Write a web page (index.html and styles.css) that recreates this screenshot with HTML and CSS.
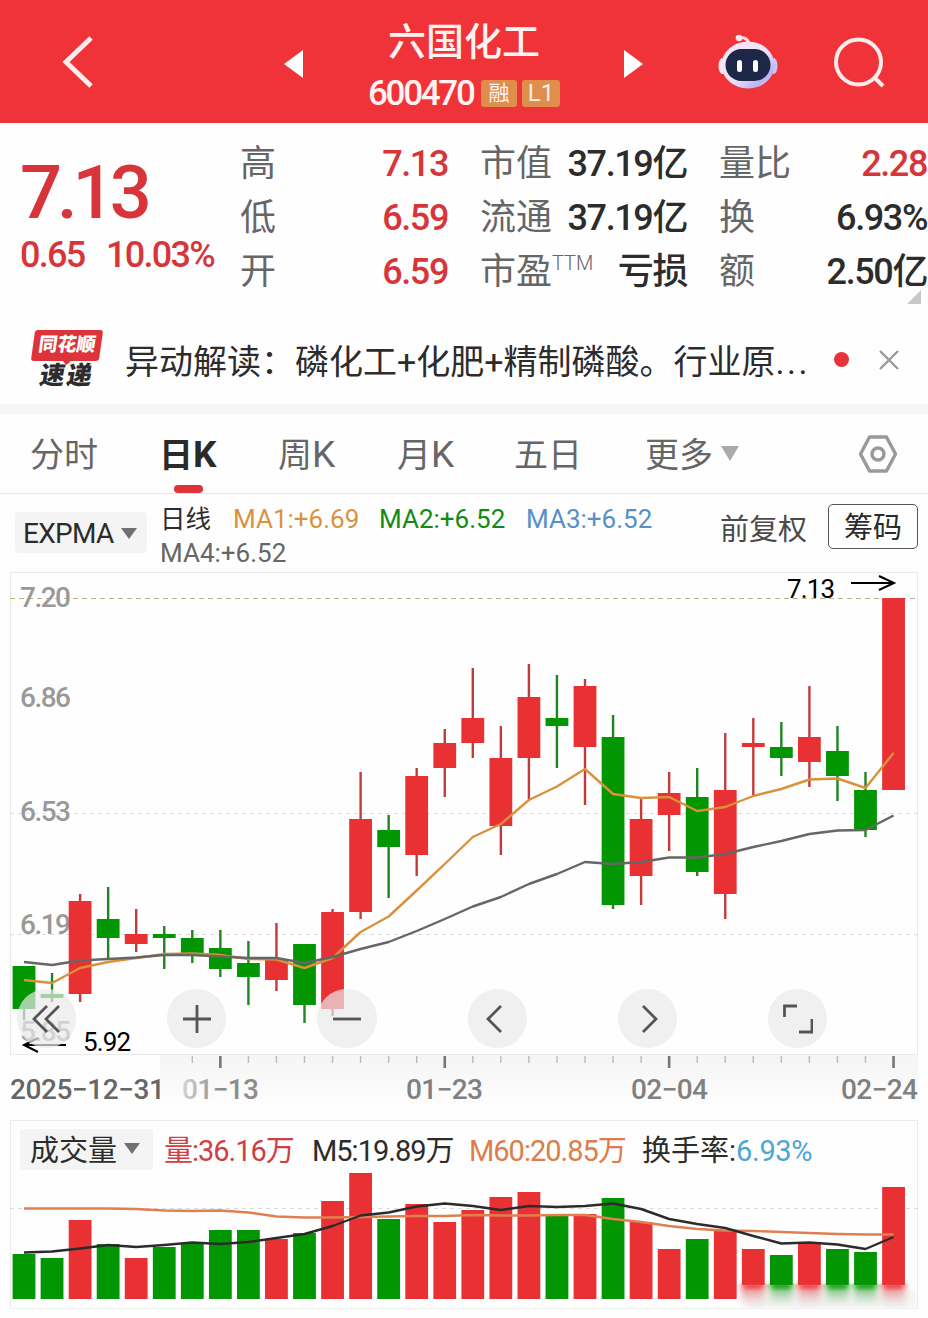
FILE: index.html
```
<!DOCTYPE html>
<html lang="zh-CN">
<head>
    <meta charset="UTF-8">
    <meta name="viewport" content="width=device-width, initial-scale=1.0">
    <title>六国化工 600470</title>
    <link rel="stylesheet" href="styles.css">
</head>
<body>
    <header>
        <svg class="back" viewBox="0 0 32 54"><path d="M29 3 L4 27 L29 51"/></svg>
        <svg class="prev" viewBox="0 0 20 28"><path d="M0 14 L19 0 V28 Z"/></svg>
        <div class="stock">
            <h1>六国化工</h1>
            <div class="code-row">
                <span class="code">600470</span>
                <span class="tag">融</span>
                <span class="tag level">L1</span>
            </div>
        </div>
        <svg class="next" viewBox="0 0 20 28"><path d="M20 14 L1 0 V28 Z"/></svg>
        <svg class="robot" viewBox="0 0 60 56">
            <defs>
                <linearGradient id="shell" x1="0" y1="0" x2="1" y2="1">
                    <stop offset="0" stop-color="#ffe9f0"/>
                    <stop offset="0.55" stop-color="#ece0fb"/>
                    <stop offset="0.8" stop-color="#b9b4f5"/>
                    <stop offset="1" stop-color="#f6dcf3"/>
                </linearGradient>
            </defs>
            <path d="M20 4 Q28 2 31 9" fill="none" stroke="#ffd9dc" stroke-width="3"/>
            <circle cx="21" cy="4" r="3.3" fill="#ffe6e8"/>
            <ellipse cx="4.500" cy="32" rx="4" ry="8" fill="#fbe3f2"/>
            <ellipse cx="55.500" cy="32" rx="4" ry="8" fill="#c9c6fb"/>
            <ellipse cx="30" cy="31" rx="26.500" ry="23.500" fill="url(#shell)"/>
            <rect x="7.500" y="15" width="45" height="32" rx="16" fill="#1d2747"/>
            <rect x="19" y="26" width="5" height="12" rx="2.500" fill="#fff"/>
            <rect x="35" y="26" width="5" height="12" rx="2.500" fill="#fff"/>
        </svg>
        <svg class="search" viewBox="0 0 52 52"><circle cx="24.500" cy="25" r="22.500"/><path d="M40 40 L49 49"/></svg>
    </header>

    <section class="quote">
        <div class="price-box">
            <div class="price">7.13</div>
            <div class="change"><span>0.65</span><span>10.03%</span></div>
        </div>
        <dl class="col-high">
            <dt>高</dt><dd class="up">7.13</dd>
            <dt>低</dt><dd class="up">6.59</dd>
            <dt>开</dt><dd class="up">6.59</dd>
        </dl>
        <dl class="col-cap">
            <dt>市值</dt><dd>37.19亿</dd>
            <dt>流通</dt><dd>37.19亿</dd>
            <dt>市盈<sup>TTM</sup></dt><dd>亏损</dd>
        </dl>
        <dl class="col-ratio">
            <dt>量比</dt><dd class="up">2.28</dd>
            <dt>换</dt><dd>6.93%</dd>
            <dt>额</dt><dd>2.50亿</dd>
        </dl>
        <i class="corner"></i>
    </section>

    <section class="news">
        <div class="news-logo">
            <b>同花顺</b>
            <em>速递</em>
        </div>
        <p>异动解读：磷化工+化肥+精制磷酸。行业原<span>...</span></p>
        <i class="dot"></i>
        <svg class="close" viewBox="0 0 22 22"><path d="M2 2 L20 20 M20 2 L2 20"/></svg>
    </section>

    <nav>
        <a class="t1">分时</a>
        <a class="t2 active">日<span>K</span></a>
        <a class="t3">周<span>K</span></a>
        <a class="t4">月<span>K</span></a>
        <a class="t5">五日</a>
        <a class="t6">更多</a>
        <i class="caret big"></i>
        <svg class="setting" viewBox="0 0 40 38">
            <path d="M11.500 2 H28.500 L37.500 19 L28.500 36 H11.500 L2.500 19 Z"/>
            <circle cx="20" cy="19" r="6"/>
        </svg>
    </nav>

    <section class="indicator">
        <div class="chip">EXPMA<i class="caret"></i></div>
        <div class="ma">
            <span class="ma-day">日线</span>
            <span class="ma1">MA1:+6.69</span>
            <span class="ma2">MA2:+6.52</span>
            <span class="ma3">MA3:+6.52</span>
            <span class="ma4">MA4:+6.52</span>
        </div>
        <span class="adjust">前复权</span>
        <button>筹码</button>
    </section>

    <section class="kline">
        <svg id="kline" viewBox="0 570 928 550"></svg>
        <div class="tools">
            <span><svg viewBox="0 0 30 30"><path d="M15 2 L2 15 L15 28 M27 2 L14 15 L27 28"/></svg></span>
            <span><svg viewBox="0 0 30 30"><path d="M1 15 H29 M15 1 V29"/></svg></span>
            <span><svg viewBox="0 0 30 30"><path d="M1 15 H29"/></svg></span>
            <span><svg viewBox="0 0 30 30"><path d="M19 2 L6 15 L19 28"/></svg></span>
            <span><svg viewBox="0 0 30 30"><path d="M11 2 L24 15 L11 28"/></svg></span>
            <span><svg viewBox="0 0 30 30"><path d="M1.500 13 V2 H14 M29 15 V28 H16"/></svg></span>
        </div>
    </section>

    <section class="volume">
        <div class="vol-head">
            <div class="chip">成交量<i class="caret"></i></div>
            <span class="vol">量:36.16万</span>
            <span class="m5">M5:19.89万</span>
            <span class="m60">M60:20.85万</span>
            <span class="rate">换手率:<b>6.93%</b></span>
        </div>
        <svg id="volume" viewBox="10 1170 908 138"></svg>
    </section>

    <script src="chart.js"></script>
</body>
</html>
```
FILE: styles.css
```
* {
    box-sizing: border-box;
}

body {
    margin: 0;
    width: 928px;
    height: 1318px;
    overflow: hidden;
    background-color: #fefefe;
    font-family: Roboto, "Noto Sans CJK SC", sans-serif;
    color: #2c2c2c;
}

header {
    display: flex;
    align-items: center;
    height: 123px;
    background-color: #f03239;
}

header svg {
    flex: none;
    fill: #fff;
}

header .back {
    width: 32px;
    height: 54px;
    margin-left: 62px;
    fill: none;
    stroke: #ffecec;
    stroke-width: 5;
}

header .prev {
    width: 20px;
    height: 28px;
    margin: 4px 0 0 190px;
}

.stock {
    width: 200px;
    margin-left: 60px;
    padding-top: 13px;
    color: #fff2f0;
}

.stock h1 {
    margin: 0;
    font-size: 38px;
    font-weight: 500;
    line-height: 50px;
    text-align: center;
}

.code-row {
    display: flex;
    align-items: center;
    height: 52px;
    gap: 6px;
    padding-left: 4px;
}

.code {
    width: 107px;
    font-size: 35px;
    letter-spacing: -2.3px;
    font-weight: 500;
}

.tag {
    width: 36px;
    height: 27px;
    border-radius: 3px;
    background-color: #e08e4b;
    font-size: 21px;
    line-height: 27px;
    text-align: center;
}

.tag.level {
    width: 38px;
    margin-left: -1px;
    font-size: 24px;
}

header .next {
    width: 20px;
    height: 28px;
    margin: 4px 0 0 59px;
}

header .robot {
    width: 60px;
    height: 56px;
    margin-left: 75px;
}

header .search {
    width: 52px;
    height: 52px;
    margin: 3px 0 0 56px;
    fill: none;
    stroke: #ffecec;
    stroke-width: 4;
}

.quote {
    position: relative;
    display: flex;
    height: 199px;
    padding-top: 14px;
}

.price-box {
    width: 240px;
    padding-left: 20px;
    color: #d8353a;
}

.price {
    height: 92px;
    padding-top: 10px;
    font-size: 74px;
    font-weight: 500;
    line-height: 92px;
    letter-spacing: -5px;
}

.change {
    display: flex;
    gap: 24px;
    margin-top: 6px;
    font-size: 36px;
    font-weight: 500;
    line-height: 40px;
    letter-spacing: -1.7px;
}

.change span:first-child {
    width: 62px;
}

dl {
    display: grid;
    grid-template-columns: 80px 1fr;
    grid-auto-rows: 54px;
    margin: 0;
    font-size: 36px;
    line-height: 54px;
    white-space: nowrap;
}

dt {
    color: #666;
}

dt sup {
    display: inline-block;
    font-size: 20px;
    line-height: 20px;
    vertical-align: 14px;
    font-weight: 300;
}

dd {
    margin: 0;
    text-align: right;
    font-weight: 500;
    letter-spacing: -1.4px;
}

.up {
    color: #d8353a;
}

.col-high {
    width: 208px;
}

.col-cap {
    width: 207px;
    margin-left: 32px;
}

.col-ratio {
    width: 208px;
    margin-left: 32px;
}

.corner {
    position: absolute;
    right: 7px;
    top: 167px;
    border-left: 14px solid transparent;
    border-bottom: 14px solid #c8c8c8;
}

.news {
    display: flex;
    align-items: center;
    height: 92px;
    padding: 0 0 7px 31px;
    border-bottom: 10px solid #f6f6f6;
}

.news-logo {
    display: flex;
    flex-direction: column;
    align-items: center;
    width: 72px;
    margin-right: 22px;
}

.news-logo b {
    position: relative;
    width: 68px;
    height: 31px;
    background-color: #dd3339;
    border-radius: 3px;
    color: #fff;
    font-size: 19px;
    line-height: 30px;
    text-align: center;
    transform: skewX(-8deg);
    font-weight: 900;
}

.news-logo b::after {
    content: "";
    position: absolute;
    left: 31px;
    top: 30px;
    border: 5px solid transparent;
    border-top-color: #dd3339;
    border-bottom: 0;
}

.news-logo em {
    font-size: 25px;
    font-weight: 900;
    line-height: 29px;
    letter-spacing: 2px;
    font-style: normal;
    transform: skewX(-10deg);
}

.news p {
    width: 686px;
    margin: 0;
    font-size: 34px;
    white-space: nowrap;
}

.news p span {
    letter-spacing: 2.5px;
}

.dot {
    width: 15px;
    height: 15px;
    margin-left: 23px;
    border-radius: 50%;
    background-color: #e8323a;
}

.close {
    width: 22px;
    height: 22px;
    margin-left: 29px;
    stroke: #999;
    stroke-width: 2.4;
}

nav {
    display: flex;
    align-items: center;
    height: 80px;
    padding-left: 30px;
    border-bottom: 1px solid #e9e9e9;
    font-size: 34px;
    color: #666;
}

nav a {
    position: relative;
    top: -1px;
    white-space: nowrap;
}

nav a span {
    font-size: 37px;
}

.t1 { width: 129px; }
.t2 { width: 119px; }
.t3 { width: 119px; }
.t4 { width: 117px; }
.t5 { width: 131px; }
.t6 { width: 76px; }

nav .active {
    color: #2a2a2a;
    font-weight: 700;
}

nav .active::after {
    content: "";
    position: absolute;
    left: 15px;
    bottom: -16px;
    width: 29px;
    height: 8px;
    border-radius: 4px;
    background-color: #dd3339;
}

.caret {
    flex: none;
    display: inline-block;
    border: 8px solid transparent;
    border-top: 11px solid #707070;
    border-bottom: 0;
}

.caret.big {
    border-width: 15px 9px 0;
    border-top-color: #aaa;
}

.setting {
    width: 40px;
    height: 38px;
    margin-left: 119px;
    fill: none;
    stroke: #999;
    stroke-width: 3.4;
    stroke-linejoin: round;
}

.indicator {
    display: flex;
    height: 76px;
    padding-left: 15px;
}

.chip {
    display: flex;
    align-items: center;
    gap: 7px;
    height: 41px;
    border-radius: 4px;
    background-color: #f4f4f4;
    white-space: nowrap;
}

.indicator .chip {
    width: 132px;
    margin-top: 18px;
    padding: 1px 0 0 8px;
    font-size: 28px;
    letter-spacing: -0.7px;
}

.ma {
    display: flex;
    flex-wrap: wrap;
    align-content: flex-start;
    width: 545px;
    margin-left: 13px;
    padding-top: 8px;
    font-size: 26px;
    line-height: 34px;
}

.ma-day { width: 73px; font-size: 25.5px; }
.ma1 { width: 146px; color: #d99340; }
.ma2 { width: 147px; color: #138a13; }
.ma3 { width: 150px; color: #5590c6; }
.ma4 { color: #666; }

.adjust {
    width: 108px;
    margin-left: 15px;
    font-size: 29px;
    line-height: 73px;
    color: #4a4a4a;
}

.indicator button {
    width: 90px;
    height: 45px;
    margin-top: 10px;
    padding: 2px 0 0;
    border: 1px solid #555;
    border-radius: 5px;
    background: none;
    font-family: inherit;
    font-size: 29px;
    line-height: 43px;
    color: #2a2a2a;
}

.kline {
    position: relative;
    height: 550px;
}

.kline > svg {
    display: block;
    width: 928px;
    height: 550px;
}

.tools {
    position: absolute;
    left: 17px;
    top: 419px;
    display: flex;
    gap: 91px;
}

.tools span {
    display: flex;
    align-items: center;
    justify-content: center;
    width: 59.2px;
    height: 59px;
    border-radius: 50%;
    background-color: rgba(233, 233, 233, 0.7);
}

.tools svg {
    width: 30px;
    height: 30px;
    fill: none;
    stroke: #555;
    stroke-width: 2.8;
}

.volume {
    width: 908px;
    height: 189px;
    margin-left: 10px;
    border: 1px solid #eaeaea;
    border-bottom-color: #f0f0f0;
}

.vol-head {
    display: flex;
    align-items: center;
    height: 49px;
    padding: 8px 0 0 9px;
    font-size: 29px;
    letter-spacing: -1px;
    white-space: nowrap;
}

.vol-head .chip {
    width: 133px;
    margin-right: 11px;
    padding-left: 10px;
    padding-bottom: 3px;
    letter-spacing: 0;
}

.vol-head > span {
    padding-bottom: 4px;
}

.vol { width: 148px; color: #cf3f43; }
.m5 { width: 157px; }
.m60 { width: 173px; color: #dc7d4b; }

.rate {
    letter-spacing: 0;
}

.rate b {
    font-weight: 400;
    color: #4ea6d2;
    letter-spacing: -0.3px;
}

.volume > svg {
    display: block;
    width: 908px;
    height: 138px;
    margin-left: -1px;
}

svg text {
    font-family: Roboto, "Noto Sans CJK SC", sans-serif;
}

.red { fill: #e93134; stroke: #c4393c; }
.green { fill: #029602; stroke: #1f851f; }
.wick { stroke-width: 2.4; }
.body { stroke: none; }
.line { fill: none; stroke-width: 2.4; stroke-linejoin: round; }
.grid { stroke: #dcdcdc; stroke-dasharray: 4 4; }
.grid.top { stroke: #b5b48a; stroke-dasharray: 5 4; }
.axis { fill: #999; font-size: 28px; font-weight: 500; }
.date { fill: #808080; font-size: 28px; font-weight: 500; }
.mark { fill: #000; font-size: 26px; }
.arrow { fill: none; stroke: #000; stroke-width: 2; }
```
FILE: chart.js
```
// [color, high, bodyTop, bodyBottom, low, volumeTop]
const days = [
    ['green', 966, 966, 1009, 1020, 1254],
    ['green', 973, 994, 998, 1002, 1258],
    ['red', 894, 901, 994, 1002, 1220],
    ['green', 887, 919, 938, 958, 1244],
    ['red', 909, 934, 944, 952, 1258],
    ['green', 926, 934, 938, 969, 1247],
    ['green', 930, 938, 953, 963, 1244],
    ['green', 930, 948, 969, 977, 1230],
    ['green', 941, 963, 977, 1005, 1230],
    ['red', 923, 959, 980, 991, 1239],
    ['green', 944, 944, 1005, 1023, 1233],
    ['red', 909, 912, 1009, 1016, 1201],
    ['red', 772, 819, 912, 919, 1173],
    ['green', 815, 830, 847, 898, 1219],
    ['red', 768, 776, 855, 876, 1204],
    ['red', 729, 743, 768, 797, 1222],
    ['red', 668, 718, 743, 758, 1210],
    ['red', 726, 758, 826, 855, 1197],
    ['red', 664, 697, 758, 799, 1192],
    ['green', 675, 718, 726, 768, 1216],
    ['red', 679, 686, 747, 805, 1214],
    ['green', 715, 737, 905, 909, 1198],
    ['red', 799, 819, 876, 905, 1222],
    ['red', 772, 793, 815, 851, 1249],
    ['green', 768, 797, 872, 876, 1239],
    ['red', 733, 790, 894, 919, 1230],
    ['red', 718, 743, 747, 796, 1249],
    ['green', 722, 747, 758, 776, 1255],
    ['red', 686, 737, 762, 787, 1244],
    ['green', 726, 751, 776, 801, 1249],
    ['green', 772, 790, 830, 837, 1252],
    ['red', 598, 598, 790, 790, 1187]
];
const ma1 = [980, 983, 968, 962, 958, 954, 953.5, 955, 959, 959.5, 968, 958, 932, 916.5, 890.5, 864, 837, 824, 800, 786.5, 769, 794, 798, 797, 811, 807, 796, 789, 779.5, 778.5, 788, 753];
const ma4 = [962, 965, 960.5, 959, 957.5, 955, 955, 956.5, 958, 958, 963, 957, 949, 942, 931, 919, 906.5, 897, 884, 874, 862, 864, 862, 857.5, 857.5, 854, 847, 841, 834, 830.5, 830, 815.5];
const m5 = [1252.5, 1251.5, 1248.5, 1245, 1247, 1245, 1242.5, 1244, 1242, 1238, 1234, 1226, 1215.5, 1212.5, 1206.5, 1203.5, 1206, 1210, 1206, 1207, 1206, 1203.5, 1209, 1219, 1224, 1228, 1236, 1243.5, 1242.5, 1244.5, 1249, 1237];
const m60 = [1208.5, 1208.5, 1208.5, 1208.5, 1209, 1210.5, 1211, 1210.5, 1212.5, 1216.5, 1217.5, 1217.5, 1217, 1216.5, 1216, 1216, 1215, 1215.5, 1215.5, 1215, 1215, 1219, 1222, 1226, 1229, 1230.5, 1231, 1232, 1233, 1234, 1234.5, 1234.5];

const x = i => 24 + i * 28.05;
const line = (values, color) =>
    `<polyline class="line" stroke="${color}" points="${values.map((v, i) => x(i) + ',' + v).join(' ')}"/>`;
const label = (cls, lx, ly, width, text, extra = '') =>
    `<text class="${cls}" x="${lx}" y="${ly}" textLength="${width}" ${extra}>${text}</text>`;

function drawKline() {
    let s = `<defs>
        <linearGradient id="band" x1="0" y1="0" x2="0" y2="1"><stop offset="0" stop-color="#f5f5f5"/><stop offset="1" stop-color="#fdfdfd"/></linearGradient>
        <linearGradient id="fade"><stop offset="0" stop-color="#d4d4d4"/><stop offset="0.5" stop-color="#8c8c8c"/></linearGradient>
    </defs>`;
    s += '<rect x="160" y="1055" width="758" height="50" fill="url(#band)"/>';
    s += '<rect x="10.5" y="572.5" width="907" height="482" fill="#fefefe" stroke="#e9e9e9"/>';
    s += '<path class="grid top" d="M10 598.5 H918"/>';
    s += '<path class="grid" d="M10 813.5 H918 M10 934.5 H918"/>';
    s += label('axis', 20, 607, 51, '7.20') + label('axis', 20, 707, 51, '6.86');
    s += label('axis', 20, 821, 51, '6.53') + label('axis', 20, 934, 51, '6.19');
    s += label('axis', 20, 1041, 51, '5.85');
    days.forEach(([color, high, top, bottom, low], i) => {
        s += `<path class="wick ${color}" d="M${x(i)} ${high} V${low}"/>`;
        s += `<rect class="body ${color}" x="${x(i) - 11.4}" y="${top}" width="22.8" height="${bottom - top}"/>`;
    });
    s += line(ma1, '#d9913c') + line(ma4, '#666');
    for (let i = 6; i < 32; i++) {
        const major = i % 8 === 7;
        s += `<path d="M${x(i)} 1056 V${major ? 1068 : 1063}" stroke="${major ? '#777' : '#bbb'}" stroke-width="${major ? 2.6 : 1.4}"/>`;
    }
    s += label('date', 10, 1099, 155, '2025−12−31', 'style="fill:#666"');
    s += label('date', 182, 1099, 77, '01−13', 'style="fill:url(#fade)"');
    s += label('date', 406, 1099, 77, '01−23') + label('date', 631, 1099, 77, '02−04') + label('date', 841, 1099, 77, '02−24');
    s += label('mark', 787, 598, 48, '7.13') + label('mark', 83, 1051, 48, '5.92');
    s += '<path class="arrow" d="M851 583 H893 M879 576 L894 583 L879 590"/>';
    s += '<path class="arrow" d="M66 1045 H25 M38 1038 L24 1045 L38 1052"/>';
    document.getElementById('kline').innerHTML = s;
}

function drawVolume() {
    let s = `<defs>
        <filter id="soft" x="-40%" width="180%"><feGaussianBlur stdDeviation="3 1"/></filter>
        <linearGradient id="red-fade" x1="0" y1="0" x2="0" y2="1"><stop offset="0" stop-color="#e93134"/><stop offset="0.9" stop-color="#f3e0e0" stop-opacity="0.4"/></linearGradient>
        <linearGradient id="green-fade" x1="0" y1="0" x2="0" y2="1"><stop offset="0" stop-color="#029602"/><stop offset="0.9" stop-color="#e4eee4" stop-opacity="0.4"/></linearGradient>
    </defs>`;
    s += '<path class="grid" d="M10 1208.5 H918"/>';
    days.forEach(([color, , , , , top], i) => {
        const end = i < 26 ? 1299 : 1285;
        s += `<rect class="body ${color}" x="${x(i) - 11.4}" y="${top}" width="22.8" height="${end - top}"/>`;
        if (i >= 26) {
            s += `<rect x="${x(i) - 11.4}" y="1284" width="22.8" height="23" fill="url(#${color}-fade)" filter="url(#soft)"/>`;
        }
    });
    s += '<rect x="744" y="1290" width="172" height="17" fill="#ddd" opacity="0.3" filter="url(#soft)"/>';
    s += line(m60, '#e07f50') + line(m5, '#2b2b2b');
    document.getElementById('volume').innerHTML = s;
}

drawKline();
drawVolume();
```
